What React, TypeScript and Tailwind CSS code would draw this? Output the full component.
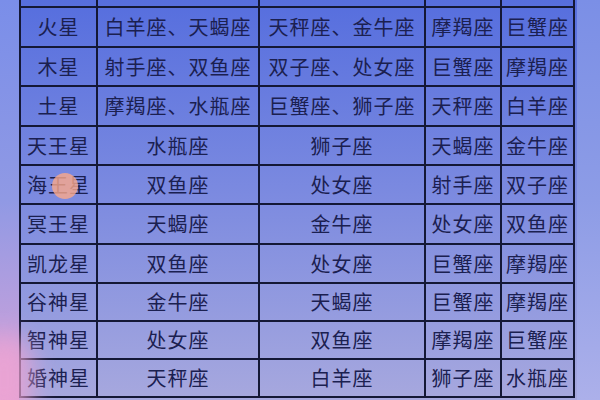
const rows: [string, string, string, string, string][] = [
  ['火星', '白羊座、天蝎座', '天秤座、金牛座', '摩羯座', '巨蟹座'],
  ['木星', '射手座、双鱼座', '双子座、处女座', '巨蟹座', '摩羯座'],
  ['土星', '摩羯座、水瓶座', '巨蟹座、狮子座', '天秤座', '白羊座'],
  ['天王星', '水瓶座', '狮子座', '天蝎座', '金牛座'],
  ['海王星', '双鱼座', '处女座', '射手座', '双子座'],
  ['冥王星', '天蝎座', '金牛座', '处女座', '双鱼座'],
  ['凯龙星', '双鱼座', '处女座', '巨蟹座', '摩羯座'],
  ['谷神星', '金牛座', '天蝎座', '巨蟹座', '摩羯座'],
  ['智神星', '处女座', '双鱼座', '摩羯座', '巨蟹座'],
  ['婚神星', '天秤座', '白羊座', '狮子座', '水瓶座'],
];

const rowHeights = ['h-[40px]', 'h-[39px]', 'h-[40px]', 'h-[39px]', 'h-[39px]', 'h-[40px]', 'h-[39px]', 'h-[38px]', 'h-[38px]', 'h-[38px]'];
const colWidths = ['w-[77px]', 'w-[162px]', 'w-[166px]', 'w-[76px]', 'w-[75px]'];

export default function App() {
  return (
    <div
      className="relative w-[600px] h-[400px] overflow-hidden flex"
      style={{ fontFamily: '"Noto Sans CJK SC", "Noto Sans", sans-serif' }}
    >
      {/* left margin */}
      <div className="w-[19px] h-full bg-gradient-to-b from-[#7a8ee9] via-[#9099e4] to-[#d6a2d8]" />

      {/* table */}
      <div className="w-[558px] h-full bg-gradient-to-b from-[#566ede] via-[#7d8be0] to-[#a7a8de] text-[#1b2050] text-[20px] leading-none">
        <div className="flex h-[8px]">
          {colWidths.map((w, i) => (
            <div key={i} className={`${w} h-full border-l-2 border-b-2 border-[#141836] last:border-r-2`} />
          ))}
        </div>
        {rows.map((r, ri) => (
          <div key={ri} className={`flex ${rowHeights[ri]}`}>
            {r.map((cell, ci) => (
              <div
                key={ci}
                className={`${colWidths[ci]} h-full flex items-center justify-center border-l-2 border-b-2 border-[#141836] last:border-r-2 tracking-[1px]`}
              >
                {cell}
              </div>
            ))}
          </div>
        ))}
      </div>

      {/* right margin */}
      <div className="flex-1 h-full bg-gradient-to-b from-[#7b8fe6] via-[#8d9ce6] to-[#acb0ea]" />

      {/* pink glow bottom-left */}
      <div className="absolute left-[-24px] bottom-[-24px] w-[56px] h-[90px] rounded-full bg-[#f0a4d2] opacity-80 blur-md" />

      {/* touch marker */}
      <div className="absolute left-[52px] top-[173px] w-[26px] h-[26px] rounded-full bg-[#fba98a] opacity-80" />
    </div>
  );
}
